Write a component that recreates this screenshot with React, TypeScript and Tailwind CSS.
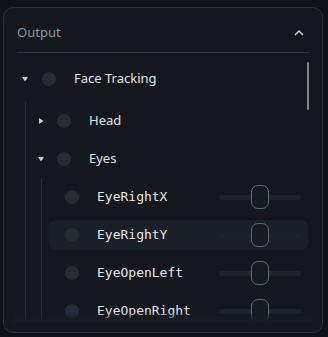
import React from "react";

const sans = { fontFamily: '"Noto Sans", "Open Sans", sans-serif' };
const mono = { fontFamily: '"DejaVu Sans Mono", "Liberation Mono", monospace' };

const Caret: React.FC<{ open?: boolean }> = ({ open }) => (
  <svg width="6" height="6" viewBox="0 0 6 6" className="shrink-0 text-[#c3cee0]">
    {open ? <path d="M0 1h6L3 5.5z" fill="currentColor" /> : <path d="M1 0v6l4.5-3z" fill="currentColor" />}
  </svg>
);

const Dot = () => <span className="block w-[14px] h-[14px] rounded-full bg-[#252c38] shrink-0" />;

const Slider = () => (
  <div className="relative ml-auto w-[82px] h-[24px] flex items-center">
    <div className="w-full h-[5px] rounded-full bg-[#1d232b]" />
    <div className="absolute left-[32px] top-0 w-[18px] h-[24px] rounded-[7px] border border-[#5b6678] bg-[#161b22]" />
  </div>
);

const leaves = ["EyeRightX", "EyeRightY", "EyeOpenLeft", "EyeOpenRight"];

export default function App() {
  return (
    <div className="w-[328px] h-[337px] bg-[#0e1116] pt-[7px] pl-[3px] pr-[5px] pb-[4px]" style={sans}>
      <div className="h-[326px] rounded-[10px] border border-[#2a2f38] bg-[#14181e] flex flex-col overflow-hidden">
        <div className="mx-[13px] h-[45px] pt-[5px] flex items-center justify-between border-b border-[#2c323b]">
          <span className="text-[13px] text-[#8a93a1]">Output</span>
          <svg width="10" height="6" viewBox="0 0 10 6" className="mr-[5px] text-[#c3cee0]">
            <path d="M1 5l4-4 4 4" stroke="currentColor" strokeWidth="1.5" fill="none" />
          </svg>
        </div>

        <div className="relative h-[269px] overflow-hidden">
          <div className="absolute right-[13px] top-[9px] w-[2px] h-[48px] rounded-full bg-[#7a869a]" />

          <div className="pt-[7px]">
            <div className="h-[38px] flex items-center pl-[18px]">
              <Caret open />
              <span className="ml-[14px]"><Dot /></span>
              <span className="ml-[18px] text-[13px] text-[#e1e5eb]">Face Tracking</span>
            </div>

            <div className="ml-[21px] mt-[4px] border-l border-[#2a3039]">
              <div className="h-[38px] flex items-center pl-[12px]">
                <Caret />
                <span className="ml-[13px]"><Dot /></span>
                <span className="ml-[18px] text-[13px] text-[#e1e5eb]">Head</span>
              </div>
              <div className="h-[38px] flex items-center pl-[12px]">
                <Caret open />
                <span className="ml-[13px]"><Dot /></span>
                <span className="ml-[18px] text-[13px] text-[#e1e5eb]">Eyes</span>
              </div>

              <div className="ml-[15px] border-l border-[#2a3039] pb-[20px]">
                {leaves.map((name, i) => (
                  <div key={name} className="h-[38px] py-[4px] pl-[7px] pr-[14px]">
                    <div
                      className={`h-[30px] rounded-[7px] flex items-center pl-[16px] pr-[7px] ${
                        i === 1 ? "bg-[#1a2028]" : ""
                      }`}
                    >
                      <Dot />
                      <span className="ml-[18px] text-[13px] text-[#e3e6ec]" style={mono}>
                        {name}
                      </span>
                      <Slider />
                    </div>
                  </div>
                ))}
              </div>
            </div>
          </div>

          <div className="absolute left-[9px] right-[10px] bottom-0 h-[10px] bg-gradient-to-b from-transparent to-[#171c23]" />
        </div>
      </div>
    </div>
  );
}
